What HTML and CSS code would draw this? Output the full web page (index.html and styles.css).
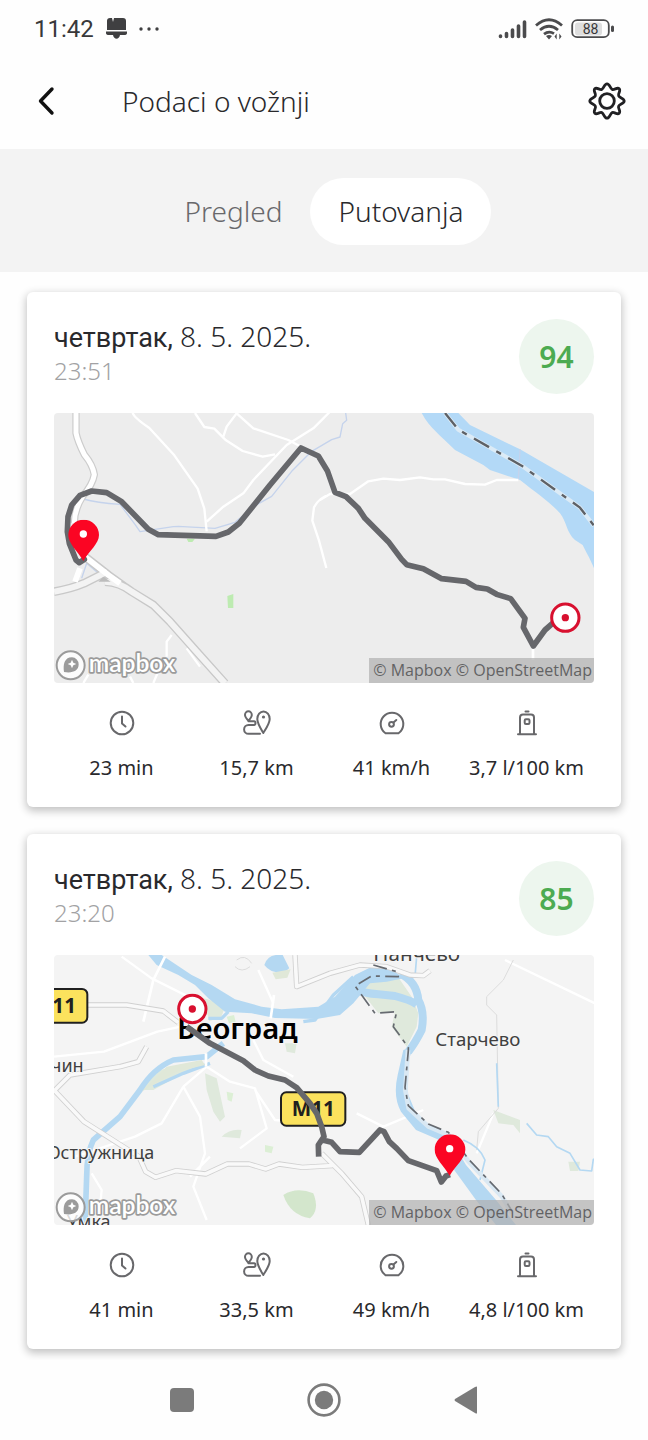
FILE: index.html
```html
<!DOCTYPE html>
<html lang="sr">
<head>
<meta charset="utf-8">
<meta name="viewport" content="width=device-width, initial-scale=1">
<title>Podaci o vožnji</title>
<link rel="stylesheet" href="styles.css">
</head>
<body>
<svg class="defs" aria-hidden="true">
  <defs>
    <symbol id="clock" viewBox="0 0 28 28"><circle cx="14" cy="14" r="11.300"/><path d="M14 7.500v7l3.500 3"/></symbol>
    <symbol id="route" viewBox="0 0 28 28"><path d="M5.400 11.800C3.200 9.300 2 7.700 2 5.900a3.400 3.600 0 0 1 6.800 0c0 1.800-1.200 3.400-3.400 5.900zM5.400 12.300H11q1.500 0 1.500 1.800T11 16H5.500a4.300 4.300 0 0 0 0 8.800H17"/><path d="M20.300 24c-3.300-5.500-6-9.700-6-14a6.200 7.500 0 0 1 12.400 0c0 4.300-3 8.500-6.400 14z"/><circle class="solid" cx="20.500" cy="8" r="1.600"/></symbol>
    <symbol id="gauge" viewBox="0 0 28 28"><path d="M7.500 24.300a11.300 11.300 0 1 1 13 0z"/><circle cx="13.500" cy="15.300" r="2.400"/><path d="M15.500 13.500l2.800-2.500"/></symbol>
    <symbol id="fuel" viewBox="0 0 28 28"><path d="M7 25V8.500q0-3 3-3h8q3 0 3 3V25M5 25.300h18M12.500 2.600h3"/><rect x="11.700" y="10.200" width="4.800" height="4.800" rx="1.200"/></symbol>
    <symbol id="pin" viewBox="0 0 96 126"><path fill="#fb0523" d="M46 124C28 92 1 73 1 46a46 46 0 0 1 92 0c0 27-29 46-47 78z"/><circle cx="46" cy="43" r="11" fill="#fff"/></symbol>
    <symbol id="target" viewBox="0 0 94 94"><circle cx="47" cy="47" r="41" fill="#fff" stroke="#d8102f" stroke-width="9"/><circle cx="47" cy="47" r="11" fill="#d8102f"/></symbol>
    <symbol id="mapbox" viewBox="0 0 390 100">
      <circle cx="50" cy="49" r="42" fill="#fff" fill-opacity=".8" stroke="#9b9b9b" stroke-width="6"/>
      <path fill="#9b9b9b" d="M30 69c-3-20 0-44 24-44a21 21 0 0 1 20 21c0 21-20 27-44 23z"/>
      <path fill="#fff" d="M54 32l4 9 9 4-9 4-4 9-4-9-9-4 9-4z"/>
      <text class="wordmark" x="104" y="68">mapbox</text>
    </symbol>
  </defs>
</svg>

<div class="statusbar">
  <div class="status-left">
    <span>11:42</span>
    <svg width="21" height="22" viewBox="0 0 21 22" fill="#3f3f41"><path d="M1 12V3q0-3 3-3h2l1 4 1-4h9q3 0 3 3v9zM0 13.500h21v1.500q0 2-3 2h-4c-1 5-6 5-7 0H3q-3 0-3-2z"/></svg>
    <svg width="20" height="4" viewBox="0 0 20 4" fill="#3f3f41"><circle cx="2" cy="2" r="1.700"/><circle cx="10" cy="2" r="1.700"/><circle cx="18" cy="2" r="1.700"/></svg>
  </div>
  <div class="status-right">
    <svg width="29" height="20" viewBox="0 0 29 20" stroke="#4b4b4d" stroke-width="3.600" stroke-linecap="round"><path d="M2.500 17.500v-.5M8.500 17.500v-3M14.500 17.500V11M20.500 17.500V7M26.500 17.500V3"/></svg>
    <svg width="28" height="22" viewBox="0 0 28 22" fill="none" stroke="#4b4b4d" stroke-width="2.800"><path d="M1 7.500Q14-4 27 7.500M5 12q9-7.500 18 0M9 16.200q5-3.800 10-.5"/><path fill="#4b4b4d" stroke="none" d="M11 18q3-2 6 0l-3 3.500zM19.500 18.500l2.200-3v6zM26.500 18.500l-2.200 3v-6z"/></svg>
    <svg class="battery" width="43" height="20" viewBox="0 0 43 20"><rect x="4" y="3.500" width="27" height="13" rx="3" fill="#dedede"/><rect x="1.200" y="1.200" width="36.600" height="17" rx="5" fill="none" stroke="#4b4b4d" stroke-width="1.800"/><rect x="40" y="6.500" width="3" height="6.500" rx="1.500" fill="#4b4b4d"/><text x="19.500" y="14.700">88</text></svg>
  </div>
</div>

<header class="appbar">
  <button class="icon-button" aria-label="Nazad"><svg width="20" height="30" viewBox="0 0 20 30"><path d="M16 3L4.500 15 16 27" fill="none" stroke="#111" stroke-width="3.400" stroke-linecap="round" stroke-linejoin="round"/></svg></button>
  <h1>Podaci o vožnji</h1>
  <button class="icon-button" aria-label="Podešavanja"><svg width="38" height="38" viewBox="0 0 38 38" fill="none" stroke="#202023" stroke-width="2.800" stroke-linejoin="round"><circle cx="19" cy="19" r="7.300"/><path d="M19 1.800C21.800 1.800 22 6.500 24.200 7.400S29.200 4.800 31.200 6.800 29.700 11.600 30.600 13.800 36.200 16.200 36.200 19 31.500 22 30.600 24.200 33.200 29.200 31.200 31.200 26.400 29.700 24.200 30.600 21.800 36.200 19 36.200 16 31.500 13.800 30.600 8.800 33.200 6.800 31.200 8.300 26.400 7.400 24.200 1.800 21.800 1.800 19 6.500 16 7.400 13.800 4.800 8.800 6.800 6.800 11.600 8.300 13.800 7.400 16.200 1.800 19 1.800z"/></svg></button>
</header>

<nav class="tabs">
  <button class="tab">Pregled</button>
  <button class="tab tab-active">Putovanja</button>
</nav>

<main class="trips">
  <article class="trip">
    <div class="trip-head">
      <div><h2><span class="day">четвртак,</span> 8. 5. 2025.</h2><time>23:51</time></div>
      <div class="score">94</div>
    </div>
    <div class="map">
      <svg class="map-art" viewBox="42 39 1620 810" fill="none" stroke-linejoin="round" role="img" aria-label="Mapa putovanja">
        <rect x="42" y="39" width="1620" height="810" fill="#ededed"/>
        <path fill="#b3d9f7" d="M1145 39C1170 85 1200 105 1245 150L1330 195 1350 210 1440 240C1490 280 1535 310 1560 340 1580 365 1580 400 1605 420L1628 435C1640 460 1650 475 1662 505V276L1440 148 1290 75 1255 39z"/>
        <g stroke="#c5d3ec" stroke-width="4"><path d="M130 297q40 12 110 16l45 60 15 22 100-15 15 -1 110 6 60-18 60-50 50-28 60-75 60-60 60-35 25-8 8-40 12-10-4-30"/><path d="M125 535l15-45 35 30M1440 148l-5 90"/></g>
        <g stroke="#fff" stroke-width="7"><path d="M278 39q5 15 50 45l75 82 70 100 20 60 7 68"/><path d="M465 39l28 42 30 5 35 35 50 32 60 17 37-7"/><path d="M590 40l-30 40-10 30M590 40l50 45 105 35 38 20"/><path d="M500 365l50-45 60-40 30-40 100-105 80-50 60-60"/><path d="M872 282q-35 10-50 40l-5 40 20 60 22 82M840 300l30-18 60 0 55-38 45-8 50 4 60-8 40 6 35 0 60 14 60 2 35-14 65 0"/><path d="M395 705l-15 20v45M440 745l40 55M130 849l15-25M270 830l10 19M340 849l15-35"/></g>
        <path stroke="#ccc" stroke-width="22" d="M108 39v60q5 25 25 65 25 30 30 60-5 30-35 65-25 40-25 80"/>
        <path stroke="#fff" stroke-width="15" d="M108 39v60q5 25 25 65 25 30 30 60-5 30-35 65-25 40-25 80"/>
        <path stroke="#c8c8c8" stroke-width="26" d="M42 575q50-8 90-25l70-35M135 470l70 55 70 50M195 545q45 2 80 30l65 40 50 50 80 90 85 95"/>
        <path stroke="#f3f3f3" stroke-width="18" d="M42 575q50-8 90-25l70-35M195 545q45 2 80 30l65 40 50 50 80 90 85 95"/>
        <path stroke="#fff" stroke-width="17" d="M135 470l70 55 35 25M105 545l15-40"/>
        <path fill="#bcbcbc" d="M175 545l15-15 22 15z"/>
        <path fill="#bdebb1" d="M562 588l18-6v42h-16zM440 416h25l-8 10h-12z"/>
        <path stroke="#dcebf6" stroke-width="12" d="M1215 39l40 50 190 108 175 126 42 54"/>
        <path stroke="#5e6166" stroke-width="7" stroke-dasharray="52 25 16 25" d="M1215 39l40 50 190 108 175 126 42 54"/>
        <path stroke="#fff" stroke-width="8" d="M1479 740v40"/>
        <path stroke="#66676b" stroke-width="17" stroke-linecap="round" d="M133 478L118 488 108 480 88 430 82 395 84 350 95 315 120 286 155 273 200 278 245 305 325 388 355 404 528 409 565 396 598 370 690 255 783 144 835 168 862 212 885 277 918 290 955 325 975 355 1045 425 1085 478 1100 494 1150 506 1205 536 1278 544 1308 562 1342 567 1370 583 1412 596 1455 655 1450 682 1480 738 1515 690 1540 668"/>
        <use href="#pin" x="84" y="359" width="96" height="126"/>
        <use href="#target" x="1529" y="606" width="94" height="94"/>
        <use href="#mapbox" x="42" y="747" width="390" height="100"/>
      </svg>
      <div class="attribution"><a href="#">© Mapbox</a> <a href="#">© OpenStreetMap</a></div>
    </div>
    <ul class="stats">
      <li><svg><use href="#clock"/></svg>23 min</li>
      <li><svg><use href="#route"/></svg>15,7 km</li>
      <li><svg><use href="#gauge"/></svg>41 km/h</li>
      <li><svg><use href="#fuel"/></svg>3,7 l/100 km</li>
    </ul>
  </article>

  <article class="trip">
    <div class="trip-head">
      <div><h2><span class="day">четвртак,</span> 8. 5. 2025.</h2><time>23:20</time></div>
      <div class="score">85</div>
    </div>
    <div class="map">
      <svg class="map-art" viewBox="42 45 1620 810" fill="none" stroke-linejoin="round" role="img" aria-label="Mapa putovanja">
        <rect x="42" y="45" width="1620" height="810" fill="#f4f4f4"/>
        <g fill="#dfe9dc"><path d="M490 175l68 18-15 40-35 10zM495 400l35 15 25 115-15 15-20-30-20-65zM545 590q25-25 60-20l-5 25zM300 450l60-60 110-25 20 10-60 25-90 50z"/><path d="M960 150L1000 110 1070 105 1115 170 1135 220 1130 260 1100 320 1055 260 1065 215 1015 220zM1360 510l80 30v40l-20-25-45-5zM1585 665h35l-5 28h-25zM735 310h35l-5 30-25-5z"/></g>
        <path fill="#d3e6cc" d="M730 765q40-25 90-5 20 50-10 75-60-10-80-70z"/>
        <path fill="#dcefd5" d="M675 615l25 5-5 20-20-5zM560 455l20 5-5 25-12-5zM560 230l22-5 5 20-20 5z"/>
        <g stroke="#fff" stroke-width="7"><path d="M245 50l90 65 110 55M42 350l150-15 160-60 70-15M430 440l-65 110-80 40-180 60M430 440l50 90 15 110-35 100 40 100M500 380l-70 60M500 380l70 45 75 20 35 120-80 60M655 90l45 100M155 700l30 50-10 100M640 300l30 60 90 50M645 450l60 90 110 10M510 650l-60 60M950 520l80 40 120-50M1395 60l270 130M1310 640l50-120"/></g>
        <path stroke="#dcdcdc" stroke-width="3" d="M590 60q25-20 45 10M585 80q20 20 45 0M1420 60l-30 60-50 50 0 25 30 30 5 280-60 70-5 55"/>
        <g fill="none" stroke="#b4d8f2">
          <path stroke-width="17" d="M550 310l-50 40-100 10q-60 25-100 90l-60 80-80 70q-20 40-20 110l-5 145"/>
          <path stroke-width="10" d="M340 440l90-40 80-30M505 235l40 0 20-20M790 245l35-5 55-75 60-55"/>
          <path stroke-width="24" d="M925 145q50 15 90 18l50 5q45 12 65 25M1080 100q50 25 55 80 20 35 10 90-20 40-40 65"/>
          <path stroke-width="5" d="M1270 600q50 20 65 60l-15 60M1130 50l-5 60M1375 500l-5-130M1460 550l30 35 35 5 25 30 40 20 30 50 35 3 5-35 30 3"/>
        </g>
        <path fill="#b4d8f2" d="M325 45h40l90 60 60 30 70 43 80 22 60 8 110-8 50-30 60-65 50-25 45-5 50 40-50 10-50 5-50 60-40 35-70 12-125-3-70-14-80-5-50-40-40-40-50-30-65-30z"/>
        <path fill="#b4d8f2" d="M1090 330l30-10q-15 40-22 70l5 70 25 60 50 45 40 10 60 100 90 105 60 75h-60l-60-75-80-110-30-70-70-30-45-55q-25-45-10-110z"/>
        <path stroke="#fff" stroke-width="8" d="M375 50l-35 70-30 125M702 165l-10 70M498 340v40"/>
        <path fill="#b4d8f2" d="M673 75q10-35 55-30l20 40-15 12q-40 5-60-22z"/>
        <path fill="#e0e8d8" d="M697 98l55-10-10 25-35 5zM305 455l75-75 105-20 10 15-85 20-80 45z"/>
        <path stroke="#d0d0d0" stroke-width="16" d="M140 195l120 0 110 18 45 35M42 453L90 405l150-25 55-15 25-45M42 450l90 95 165 105 20 45 30 17 60-20 90 10 65-30 65 0 50 15 40-15 70 10 90-5M765 45l5 95 100-40 90-25 80 5 70 25 40 2 20-15M845 640l60 60 60 70 20 85"/>
        <path stroke="#f9f9f9" stroke-width="11" d="M140 195l120 0 110 18 45 35M42 453L90 405l150-25 55-15 25-45M42 450l90 95 165 105 20 45 30 17 60-20 90 10 65-30 65 0 50 15 40-15 70 10 90-5M765 45l5 95 100-40 90-25 80 5 70 25 40 2 20-15M845 640l60 60 60 70 20 85"/>
        <path stroke="#d9e8f3" stroke-width="14" d="M1104 330l-8 120 10 55 60 55 60 25 60 80 100 105 30 50"/>
        <path stroke="#666a70" stroke-width="5" stroke-dasharray="42 16 12 16" d="M1000 75l70 20 5 15-80-2-50 30 60 82 65-5-10 45 45 62 0 10-10 110 10 55 60 55 60 25 60 80 100 105 30 50"/>
        <g class="place"><text x="131" y="395" text-anchor="end" font-size="54">чин</text><text x="343" y="657" text-anchor="end" font-size="54">Остружница</text><text x="80" y="864" font-size="54">Умка</text><text x="1000" y="64" font-size="62">Панчево</text><text x="1186" y="318" font-size="56">Старчево</text><text class="city" x="411" y="297">Београд</text></g>
        <g class="shield"><rect x="-50" y="147" width="192" height="101" rx="16"/><text x="108" y="219" text-anchor="end">11</text><rect x="723" y="457" width="193" height="100" rx="16"/><text x="820" y="529" text-anchor="middle">M11</text></g>
        <path stroke="#66676b" stroke-width="17" d="M440 260L510 310 610 362 645 390 685 408 735 420 770 443 810 490 830 520 845 560 852 590 835 615 836 650M848 600L875 607 900 635 958 637 1020 570 1032 575 1048 605 1070 625 1105 662 1190 692 1204 726 1218 708 1230 704"/>
        <use href="#target" x="410" y="160" width="94" height="94"/>
        <use href="#pin" x="1183" y="583" width="96" height="126"/>
        <use href="#mapbox" x="42" y="753" width="390" height="100"/>
      </svg>
      <div class="attribution"><a href="#">© Mapbox</a> <a href="#">© OpenStreetMap</a></div>
    </div>
    <ul class="stats">
      <li><svg><use href="#clock"/></svg>41 min</li>
      <li><svg><use href="#route"/></svg>33,5 km</li>
      <li><svg><use href="#gauge"/></svg>49 km/h</li>
      <li><svg><use href="#fuel"/></svg>4,8 l/100 km</li>
    </ul>
  </article>
</main>

<footer class="system-nav">
  <button aria-label="Nedavne aplikacije"><svg width="34" height="34" viewBox="0 0 34 34"><rect x="5" y="5" width="24" height="24" rx="4" fill="#7b7b7b"/></svg></button>
  <button aria-label="Početni ekran"><svg width="34" height="34" viewBox="0 0 34 34"><circle cx="17" cy="17" r="15.400" fill="none" stroke="#7b7b7b" stroke-width="2.600"/><circle cx="17" cy="17" r="9.200" fill="#7b7b7b"/></svg></button>
  <button aria-label="Nazad"><svg width="34" height="34" viewBox="0 0 34 34"><path d="M28 4v26q0 1-2 0L6 18q-1-1 0-2L26 4q2-1 2 0z" fill="#7b7b7b"/></svg></button>
</footer>
</body>
</html>
```
FILE: styles.css
```css
* { box-sizing: border-box; }
body {
  margin: 0;
  min-height: 100vh;
  display: flex;
  flex-direction: column;
  background: #fefefe;
  color: #29292c;
  font-family: "Noto Sans", "Open Sans", sans-serif;
}
button {
  border: 0;
  padding: 0;
  background: none;
  color: inherit;
  font: inherit;
  cursor: pointer;
}
svg { display: block; }
.defs { position: absolute; width: 0; height: 0; }

.statusbar {
  display: flex;
  justify-content: space-between;
  align-items: center;
  height: 58px;
  padding: 0 34px;
}
.status-left { display: flex; align-items: center; gap: 12px; font: 400 24px/28px Roboto, sans-serif; color: #38383a; }
.status-right { display: flex; align-items: center; gap: 8px; }
.battery text { font: 400 14px Roboto, sans-serif; fill: #38383a; text-anchor: middle; }

.appbar {
  display: flex;
  align-items: center;
  height: 91px;
  padding: 0 22px 6px 36px;
}
.appbar h1 { flex: 1; margin: 0 0 0 66px; font-size: 28px; line-height: 36px; font-weight: 300; }

.tabs {
  display: flex;
  justify-content: center;
  padding: 29px 0 27px;
  background: #f3f3f3;
}
.tab { height: 67px; padding: 0 28px 2px; border-radius: 34px; font-size: 28px; font-weight: 300; color: #68686b; }
.tab-active { background: #fff; color: #29292c; font-weight: 350; }

.trips { flex: 1; display: flex; flex-direction: column; gap: 27px; padding: 20px 27px 11px; overflow: hidden; }
.trip { padding: 27px 27px 25px; border-radius: 6px; background: #fff; box-shadow: 0 3px 8px 1px rgba(0, 0, 0, .24); }
.trip-head { display: flex; justify-content: space-between; margin-bottom: 19px; }
.trip h2 { margin: 0; font-size: 28px; line-height: 34px; font-weight: 300; }
.day { font-family: Roboto, sans-serif; font-size: 27px; font-weight: 400; }
.trip time { display: block; font-size: 24px; line-height: 32px; font-weight: 300; color: #a2a2a4; }
.score {
  display: grid;
  place-items: center;
  width: 75px;
  height: 75px;
  border-radius: 50%;
  background: #edf6ee;
  color: #4cab51;
  font-size: 30px;
  font-weight: 600;
}

.map { position: relative; border-radius: 4px; overflow: hidden; }
.map-art { width: 100%; height: auto; }
.attribution {
  position: absolute;
  right: 0;
  bottom: 0;
  padding: 0 2px 0 4px;
  background: rgba(175, 175, 175, .7);
  color: #626264;
  font: 400 16px/25px "Open Sans", sans-serif;
}
.attribution a { color: inherit; text-decoration: none; }
.wordmark { font: 600 74px Lato, sans-serif; fill: #fff; stroke: #9b9b9b; stroke-width: 10px; paint-order: stroke; }
.place { font-family: "Noto Sans", sans-serif; fill: #404040; stroke: #f6f6f6; stroke-width: 6px; paint-order: stroke; }
.city { font-size: 88px; font-weight: 600; fill: #000; }
.shield rect { fill: #fbe25d; stroke: #202020; stroke-width: 6px; }
.shield text { font: 700 62px "Noto Sans", sans-serif; fill: #202020; }

.stats { display: grid; grid-template-columns: repeat(4, 1fr); margin: 26px 0 0; padding: 0; list-style: none; }
.stats li { display: flex; flex-direction: column; align-items: center; gap: 17px; font-size: 20px; line-height: 28px; white-space: nowrap; }
.stats svg { width: 28px; height: 28px; fill: none; stroke: #68686b; stroke-width: 2px; stroke-linecap: round; stroke-linejoin: round; }
.solid { fill: #68686b; stroke: none; }

.system-nav { display: flex; justify-content: center; align-items: center; gap: 108px; height: 80px; background: #fefefe; position: relative; }
```
